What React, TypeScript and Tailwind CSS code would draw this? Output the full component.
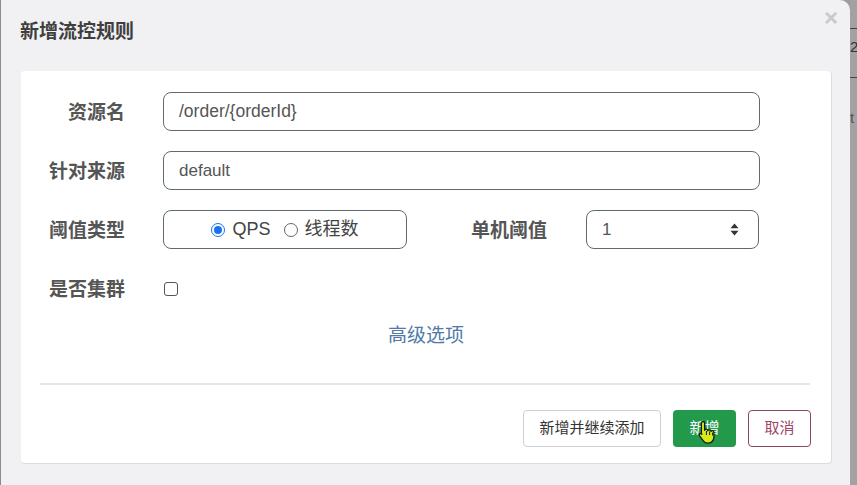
import React from 'react';

const font = { fontFamily: '"Liberation Sans", "Noto Sans CJK SC", Arial, sans-serif' };

function Label({ children, className = '' }: { children: React.ReactNode; className?: string }) {
  return (
    <div className={`w-[104px] shrink-0 pt-[4px] text-right text-[19px] font-bold text-[#555] ${className}`}>{children}</div>
  );
}

function HandCursor() {
  return (
    <svg width="18" height="24" viewBox="0 0 18 24" className="absolute left-[25px] top-[10px]">
      <path
        d="M5 1.5c1 0 1.6.7 1.6 1.6v7.2c.3-.8 1-1.2 1.8-1.1.9.1 1.4.8 1.4 1.6.3-.7 1-1.1 1.8-1 .9.1 1.4.8 1.4 1.6.4-.6 1-.9 1.7-.7.8.2 1.2.9 1.2 1.700v4.6c0 3.2-2.3 6.1-5.6 6.1H9.5c-2 0-3.3-.9-4.4-2.5L1.6 15.8c-.5-.8-.3-1.7.4-2.1.7-.4 1.5-.2 2 .4l-.6.1V3.1C3.4 2.2 4 1.5 5 1.5z"
        fill="#d7ea1c"
        stroke="#1a1a1a"
        strokeWidth="1.3"
        strokeLinejoin="round"
      />
      <path d="M8.4 11v4M11.6 11.5v3.5M14.6 12.5v3" stroke="#1a1a1a" strokeWidth="1" />
    </svg>
  );
}

export default function App() {
  return (
    <div className="flex h-[485px] w-[857px] overflow-hidden bg-[#9d9d9d]" style={font}>
      {/* Modal */}
      <div className="flex w-[850px] shrink-0 flex-col rounded-tr-[10px] border-l border-[#8c8c8c] bg-[#f1f0f3]">
        {/* Header */}
        <div className="relative flex h-[71px] shrink-0 items-center pl-[19px] pb-[7px]">
          <h4 className="text-[19px] font-bold text-[#3f3f3f]">新增流控规则</h4>
          <span className="absolute right-[12px] top-[6px] text-[24px] leading-none font-bold text-[#c9c9cc]">×</span>
        </div>

        {/* Body card */}
        <div className="mr-[18px] ml-[20px] flex h-[393px] flex-col rounded-[4px] border-r border-b border-[#dcdcdf] bg-white">
          <div className="flex flex-col gap-[20px] pt-[21px]">
            <div className="flex items-center">
              <Label>资源名</Label>
              <div className="ml-[38px] flex h-[39px] w-[597px] items-center rounded-[8px] border border-[#5f6b72] px-[15px] text-[17.5px] text-[#555]">
                /order/{'{orderId}'}
              </div>
            </div>
            <div className="flex items-center">
              <Label>针对来源</Label>
              <div className="ml-[38px] flex h-[39px] w-[597px] items-center rounded-[8px] border border-[#5f6b72] px-[15px] text-[17px] text-[#555]">
                default
              </div>
            </div>
            <div className="flex items-center">
              <Label>阈值类型</Label>
              <div className="ml-[38px] flex h-[39px] w-[244px] items-center justify-center gap-[13px] rounded-[8px] border border-[#5f6b72] text-[18px] text-[#444]">
                <span className="flex items-center gap-[7px]">
                  <span className="flex h-[14px] w-[14px] items-center justify-center rounded-full border border-[#1a73e8] bg-white">
                    <span className="h-[8px] w-[8px] rounded-full bg-[#1a73e8]" />
                  </span>
                  QPS
                </span>
                <span className="flex items-center gap-[7px]">
                  <span className="h-[14px] w-[14px] rounded-full border border-[#666] bg-white" />
                  线程数
                </span>
              </div>
              <div className="ml-[64px] pt-[4px] text-[19px] font-bold text-[#555]">单机阈值</div>
              <div className="ml-[39px] flex h-[39px] w-[173px] items-center justify-between rounded-[8px] border border-[#5f6b72] pr-[19px] pl-[15px] text-[17px] text-[#555]">
                1
                <svg width="9" height="13" viewBox="0 0 9 13">
                  <path d="M4.5 0.5L8.5 5.3H0.5z M4.5 12.5L0.5 7.7H8.5z" fill="#333" />
                </svg>
              </div>
            </div>
            <div className="flex h-[39px] items-center">
              <Label>是否集群</Label>
              <div className="ml-[39px] h-[14px] w-[14px] rounded-[3px] border border-[#555] bg-white" />
            </div>
          </div>

          <div className="mt-[14px] text-center text-[19px] text-[#5079a6]">高级选项</div>

          <div className="mt-[32px] mr-[21px] ml-[19px] h-[2px] bg-[#e6e6e9]" />

          <div className="mt-[25px] flex justify-end gap-[12px] pr-[20px]">
            <button className="h-[37px] w-[138px] rounded-[4px] border border-[#cfcfd4] bg-white text-[15px] text-[#333]">
              新增并继续添加
            </button>
            <button className="relative h-[37px] w-[63px] rounded-[4px] bg-[#22994b] text-[15px] text-white">
              新增
              <HandCursor />
            </button>
            <button className="h-[37px] w-[63px] rounded-[4px] border border-[#8d4660] bg-white text-[15px] text-[#a0466b]">
              取消
            </button>
          </div>
        </div>
      </div>

      {/* Page behind the modal */}
      <div className="flex flex-1 flex-col bg-[#a2a2a2] text-[15px] text-[#333]">
        <div className="mt-[28px] h-px bg-[#444]" />
        <div className="mt-[10px] leading-none">2</div>
        <div className="mt-[23px] h-px bg-[#444]" />
        <div className="mt-[32px] leading-none text-[#555]">t</div>
      </div>
    </div>
  );
}
